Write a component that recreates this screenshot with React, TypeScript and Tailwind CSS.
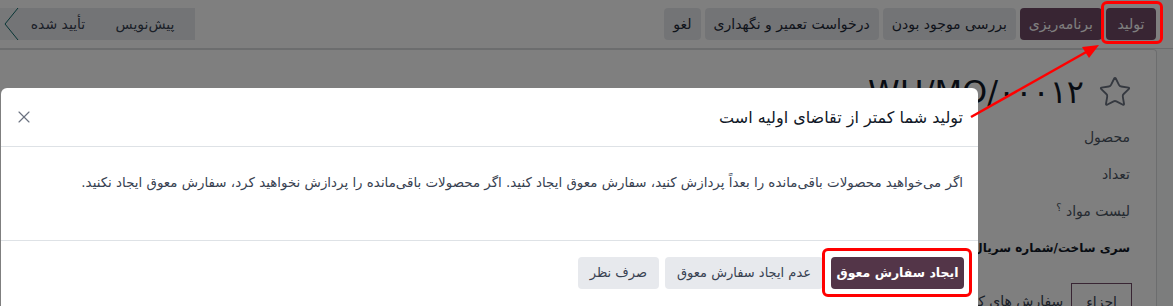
import { X, Star } from 'lucide-react'

const fa = { fontFamily: '"DejaVu Sans", "Liberation Sans", sans-serif' }

function TopButton({ label, primary }: { label: string; primary?: boolean }) {
  return (
    <div
      className={
        'flex h-8 items-center rounded px-[9px] text-[14px] ' +
        (primary ? 'bg-[#714b67] text-white' : 'bg-[#e7e9ed] text-[#1f2937]')
      }
    >
      {label}
    </div>
  )
}

export default function App() {
  return (
    <div dir="rtl" className="relative h-[306px] w-[1173px] overflow-hidden bg-white" style={fa}>
      {/* control panel */}
      <div className="flex h-[49px] items-center justify-between border-b border-[#d8dadd] pr-[17px]">
        <div className="flex items-center gap-1">
          <div className="w-[50px] [&>div]:justify-center">
            <TopButton label="تولید" primary />
          </div>
          <TopButton label="برنامه‌ریزی" primary />
          <TopButton label="بررسی موجود بودن" />
          <TopButton label="درخواست تعمیر و نگهداری" />
          <TopButton label="لغو" />
        </div>
        <div className="flex h-8 w-[195px] items-center bg-[#e7e9ed] text-[14px] text-[#374151]">
          <span className="w-[100px] text-center">پیش‌نویس</span>
          <span className="w-[74px] text-center">تأیید شده</span>
          <svg width="20" height="32" viewBox="0 0 20 32" className="mr-auto">
            <path d="M0 0 H18 L5 16 L18 32 H0 Z" fill="#eef0f2" />
            <path d="M18 0 L5 16 L18 32" fill="none" stroke="#0f6a6a" strokeWidth="1" />
          </svg>
        </div>
      </div>

      {/* sheet */}
      <div className="bg-[#f9fafb] pr-[16px]">
        <div className="h-[257px] rounded-tr border-r border-t border-[#d8dadd] bg-white pr-[24px] pt-[22px]">
          <div className="flex items-center gap-[14px]">
            <Star size={34} strokeWidth={1.3} className="text-[#6b7280]" />
            <span className="text-[32px] leading-[40px] text-[#111827]">WH/MO/۰۰۰۱۲</span>
          </div>
          <div className="mt-[14px] flex flex-col gap-[15px] pr-[2px] text-[14px] leading-[22px] text-[#4b5563]">
            <span>محصول</span>
            <span>تعداد</span>
            <span>
              لیست مواد <sup className="text-[10px]">؟</sup>
            </span>
            <span className="text-[12px] font-bold text-[#111827]">سری ساخت/شماره سریال</span>
          </div>
          <div className="mt-[24px] flex text-[14px] text-[#374151]">
            <div className="border-x border-t border-[#714b67] px-[14px] pt-[8px]">اجزاء</div>
            <div className="px-[8px] pt-[8px]">سفارش های کار</div>
          </div>
        </div>
      </div>

      {/* backdrop */}
      <div className="absolute inset-0 bg-black/50" />

      {/* dialog */}
      <div className="absolute left-[1px] top-[88px] h-[240px] w-[977px] rounded-md bg-white">
        <div className="flex h-[59px] items-center justify-between border-b border-[#dee2e6] px-[15px]">
          <span className="pt-[2px] text-[16px] text-[#111827]">تولید شما کمتر از تقاضای اولیه است</span>
          <X size={20} strokeWidth={1.4} className="ml-[-2px] text-[#6b7280]" />
        </div>
        <div className="h-[94px] border-b border-[#dee2e6] px-[15px] pt-[26px] text-[13.4px] leading-[20px] text-[#374151]">
          اگر می‌خواهید محصولات باقی‌مانده را بعداً پردازش کنید، سفارش معوق ایجاد کنید. اگر محصولات باقی‌مانده را پردازش نخواهید کرد، سفارش معوق ایجاد نکنید.
        </div>
        <div className="flex gap-[6px] px-[14px] pt-[16px] text-[13px]">
          <div className="ml-[2px] flex h-8 w-[133px] items-center justify-center rounded bg-[#533548] text-[12.5px] font-bold text-white">
            ایجاد سفارش معوق
          </div>
          <div className="flex h-8 items-center rounded bg-[#e7e9ed] px-[12px] text-[#374151]">عدم ایجاد سفارش معوق</div>
          <div className="flex h-8 items-center rounded bg-[#e7e9ed] px-[12px] text-[#374151]">صرف نظر</div>
        </div>
      </div>

      {/* annotations */}
      <div className="pointer-events-none absolute left-[1101px] top-[1px] h-[43px] w-[62px] rounded-md border-[3px] border-[#ff0000]" />
      <div className="pointer-events-none absolute left-[822px] top-[248px] h-[49px] w-[150px] rounded-md border-[3px] border-[#ff0000]" />
      <svg className="pointer-events-none absolute left-0 top-0" width="1173" height="306">
        <line x1="971" y1="117" x2="1088" y2="51" stroke="#ff0000" strokeWidth="2.5" />
        <path d="M1099 45 L1082 47 L1089 58 Z" fill="#ff0000" />
      </svg>
    </div>
  )
}
